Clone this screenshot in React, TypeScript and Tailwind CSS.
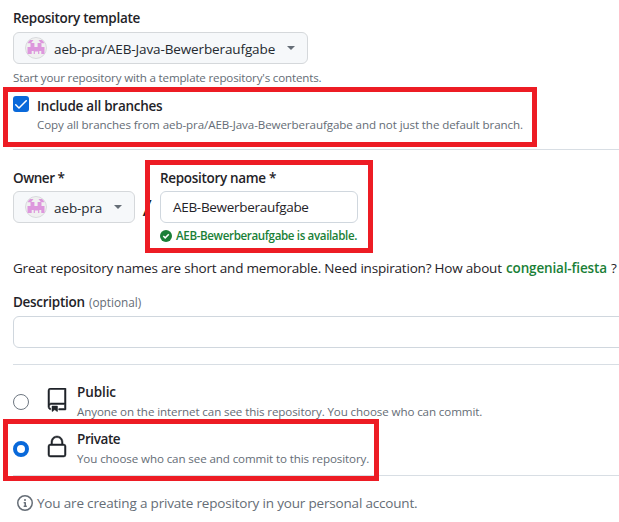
import type { ReactNode } from "react";

function Avatar() {
  return (
    <svg width="22" height="22" viewBox="0 0 22 22" className="shrink-0">
      <circle cx="11" cy="11" r="10.5" fill="#f0f0f0" stroke="#d9dadd" />
      <path
        fill="#dd97dd"
        d="M5 3h3.500L6 6.200H2.600A10 10 0 0 1 5 3zM17 3h-3.500L16 6.200h3.400A10 10 0 0 0 17 3zM5.500 6h3.900v4h3.200V6h3.900v4h3v7h-3.200v-3h-2v3h-1.200v-2.500H9.900V17H8.700v-3h-2v3H2.500v-7h3z"
      />
    </svg>
  );
}

function Caret() {
  return <span className="h-0 w-0 shrink-0 border-x-4 border-t-4 border-x-transparent border-t-[#656d76]" />;
}

function PickerButton({ children, className }: { children: ReactNode; className: string }) {
  return (
    <button
      className={`flex h-8 items-center rounded-md border border-[#d5d8db] bg-[#f6f8fa] pl-[11px] text-[13.5px] leading-5 text-[#24292f] ${className}`}
    >
      <Avatar />
      {children}
      <Caret />
    </button>
  );
}

function RepoIcon() {
  return (
    <svg width="24" height="24" viewBox="0 0 24 24" fill="#1f2328" stroke="#1f2328" strokeWidth="0.5" className="shrink-0">
      <path d="M3 2.75A2.75 2.75 0 0 1 5.75 0h14.5a.75.75 0 0 1 .75.75v20.5a.75.75 0 0 1-.75.75h-6a.75.75 0 0 1 0-1.5h5.25v-4H6A1.5 1.5 0 0 0 4.5 18v.75c0 .716.43 1.334 1.05 1.605a.75.75 0 0 1-.6 1.374A3.251 3.251 0 0 1 3 18.75ZM19.5 1.5H5.75c-.69 0-1.25.56-1.25 1.25v12.651A2.989 2.989 0 0 1 6 15h13.5Z" />
      <path d="M7 18.25a.25.25 0 0 1 .25-.25h5a.25.25 0 0 1 .25.25v5.01a.25.25 0 0 1-.397.201l-2.206-1.604a.25.25 0 0 0-.294 0L7.397 23.46a.25.25 0 0 1-.397-.2v-5.01Z" />
    </svg>
  );
}

function LockIcon() {
  return (
    <svg width="24" height="24" viewBox="0 0 24 24" fill="#1f2328" stroke="#1f2328" strokeWidth="0.5" className="shrink-0">
      <path d="M6 9V7.25C6 3.845 8.503 1 12 1s6 2.845 6 6.25V9h.5a2.5 2.5 0 0 1 2.5 2.5v8a2.5 2.5 0 0 1-2.5 2.5h-13A2.5 2.5 0 0 1 3 19.5v-8A2.5 2.5 0 0 1 5.5 9Zm-1.5 2.5v8a1 1 0 0 0 1 1h13a1 1 0 0 0 1-1v-8a1 1 0 0 0-1-1h-13a1 1 0 0 0-1 1Zm3-4.25V9h9V7.25c0-2.67-1.922-4.75-4.5-4.75-2.578 0-4.5 2.08-4.5 4.75Z" />
    </svg>
  );
}

const label = "text-[13.5px] leading-[21px] font-semibold";
const note = "text-[11.6px] leading-[18px] text-[#656d76]";

export default function App() {
  return (
    <div className="relative h-[522px] w-[619px] overflow-hidden bg-white pl-[13px] pt-2 font-['Open_Sans','Noto_Sans',sans-serif] whitespace-nowrap text-[#1f2328]">
      <div className={`h-6 ${label} tracking-[-0.3px]`}><span>Repository template</span></div>
      <PickerButton className="w-[295px]">
        <span className="ml-[7px] w-[233px] pt-px text-left tracking-[-0.12px]">aeb-pra/AEB-Java-Bewerberaufgabe</span>
      </PickerButton>
      <div className={`mt-[5px] ${note} tracking-[-0.17px]`}><span>Start your repository with a template repository's contents.</span></div>

      <div className="mt-2 flex h-[54px] gap-2">
        <span className="mt-[1px] flex h-4 w-4 items-center justify-center rounded-[3px] bg-[#0969da]">
          <svg width="12" height="9" viewBox="0 0 12 9" fill="#fff">
            <path d="M11.78.22a.75.75 0 0 1 0 1.061L4.52 8.541a.75.75 0 0 1-1.062 0L.202 5.285a.75.75 0 0 1 1.061-1.061l2.725 2.723L10.718.22a.75.75 0 0 1 1.062 0Z" />
          </svg>
        </span>
        <div>
          <div className={`pt-px ${label} tracking-[-0.26px]`}><span>Include all branches</span></div>
          <div className={`-mt-px ${note} tracking-[-0.1px]`}><span>Copy all branches from aeb-pra/AEB-Java-Bewerberaufgabe and not just the default branch.</span></div>
        </div>
      </div>
      <div className="h-px bg-[#d8dee4]" />

      <div className="mt-[17px] flex">
        <div>
          <div className={`h-6 pt-px ${label} tracking-[-0.45px]`}><span>Owner *</span></div>
          <PickerButton className="w-[122px]">
            <span className="ml-[7px] w-[60px] pt-px text-left tracking-[-0.1px]">aeb-pra</span>
          </PickerButton>
        </div>
        <div className="flex w-[25px] justify-center pt-[24px] text-[22px] leading-8"><span className="scale-x-115 font-medium">/</span></div>
        <div>
          <div className={`h-6 pt-px ${label} tracking-[-0.32px]`}><span>Repository name *</span></div>
          <div className="flex h-8 w-[198px] items-center rounded-md border border-[#d0d7de] pt-px pl-3 text-[13.5px] tracking-[-0.3px]"><span>AEB-Bewerberaufgabe</span></div>
          <div className="mt-1 flex h-[18px] items-center gap-1 text-[11.6px] leading-[18px] font-semibold tracking-[-0.37px] text-[#1a7f37]">
            <svg width="12" height="12" viewBox="0 0 12 12">
              <circle cx="6" cy="6" r="6" fill="#1a7f37" />
              <path d="m3.3 6 1.9 1.9 3.6-3.6" fill="none" stroke="#fff" strokeWidth="1.5" />
            </svg>
            <span>AEB-Bewerberaufgabe is available.</span>
          </div>
        </div>
      </div>

      <div className="mt-[13px] flex text-[13.5px] leading-[21px]">
        <span className="w-[493px] tracking-[-0.2px]">Great repository names are short and memorable. Need inspiration? How about</span>
        <span className="w-[105px] font-semibold tracking-[-0.15px] text-[#1a7f37]">congenial-fiesta</span>
        <span>?</span>
      </div>

      <div className={`mt-[13px] flex h-6 ${label}`}>
        <span className="w-[76px] tracking-[-0.29px]">Description</span>
        <span className="text-[11.8px] font-medium text-[#656d76]">(optional)</span>
      </div>
      <div className="-mr-4 h-8 rounded-md border border-[#d0d7de]" />
      <div className="mt-4 h-px bg-[#d8dee4]" />

      <div className="mt-4 flex h-[47px]">
        <span className="mt-[13px] h-4 w-4 rounded-full border border-[#6e7781]" />
        <span className="ml-4 mt-[7px]"><RepoIcon /></span>
        <div className="ml-2 pt-px">
          <div className={`${label} tracking-[-0.1px]`}><span>Public</span></div>
          <div className={`${note} tracking-[-0.11px]`}><span>Anyone on the internet can see this repository. You choose who can commit.</span></div>
        </div>
      </div>
      <div className="flex h-[47px]">
        <span className="mt-[13px] h-4 w-4 rounded-full border-[4.5px] border-[#0969da]" />
        <span className="ml-4 mt-[7px]"><LockIcon /></span>
        <div className="ml-2 pt-px">
          <div className={`${label} tracking-[-0.4px]`}><span>Private</span></div>
          <div className={`${note} tracking-[-0.11px]`}><span>You choose who can see and commit to this repository.</span></div>
        </div>
      </div>
      <div className="h-px bg-[#d8dee4]" />

      <div className="ml-1 mt-4 flex h-[22px] items-center gap-1 text-[13.5px] leading-[21px] tracking-[-0.18px] text-[#656d76]">
        <svg width="16" height="16" viewBox="0 0 16 16" fill="#656d76">
          <path d="M0 8a8 8 0 1 1 16 0A8 8 0 0 1 0 8Zm8-6.5a6.5 6.5 0 1 0 0 13 6.5 6.5 0 0 0 0-13ZM6.5 7.75A.75.75 0 0 1 7.25 7h1a.75.75 0 0 1 .75.75v2.75h.25a.75.75 0 0 1 0 1.5h-2a.75.75 0 0 1 0-1.5h.25v-2h-.25a.75.75 0 0 1-.75-.75ZM8 6a1 1 0 1 1 0-2 1 1 0 0 1 0 2Z" />
        </svg>
        <span className="pt-px">You are creating a private repository in your personal account.</span>
      </div>

      <div className="absolute top-[87px] left-[3px] h-[60px] w-[534px] border-5 border-[#ed1c24]" />
      <div className="absolute top-[160px] left-[145px] h-[93px] w-[228px] border-5 border-[#ed1c24]" />
      <div className="absolute top-[419px] left-[3px] h-[62px] w-[376px] border-5 border-[#ed1c24]" />
    </div>
  );
}
